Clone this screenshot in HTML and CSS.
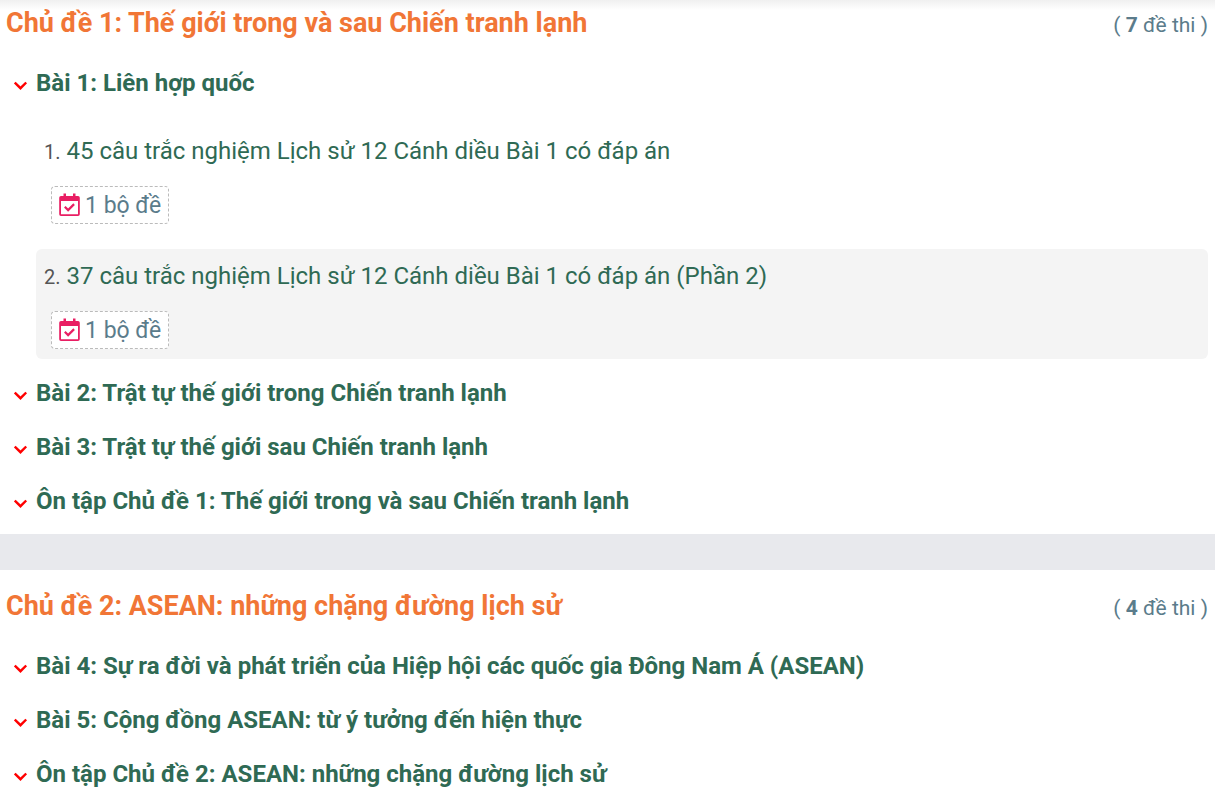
FILE: index.html
```html
<!DOCTYPE html>
<html lang="vi">
<head>
  <meta charset="UTF-8">
  <meta name="viewport" content="width=device-width, initial-scale=1">
  <title>Trắc nghiệm Lịch sử 12 Cánh diều</title>
  <link rel="stylesheet" href="styles.css">
</head>
<body>
  <svg class="sprite" aria-hidden="true">
    <symbol id="chevron" viewBox="0 0 14 10">
      <path d="M0.800 1.500 L6.500 7.200 L12.200 1.500" fill="none" stroke="currentColor" stroke-width="2.400"/>
    </symbol>
    <symbol id="calendar" viewBox="0 0 21 24">
      <path fill="currentColor" fill-rule="evenodd" d="M4.500 0.500h2.500V3h7V0.500h2.500V3H19a1.800 1.800 0 0 1 1.800 1.800v16.400a1.800 1.800 0 0 1-1.800 1.800H2a1.800 1.800 0 0 1-1.800-1.800V4.800A1.800 1.800 0 0 1 2 3h2.500zM2 8v13.200h17V8z"/>
      <path fill="none" stroke="currentColor" stroke-width="2.200" d="M5.800 13.800l3.300 3.300 6-6"/>
    </symbol>
  </svg>

  <section class="topic">
    <div class="topic-head">
      <h2><a href="#">Chủ đề 1: Thế giới trong và sau Chiến tranh lạnh</a></h2>
      <span class="count">( <b>7</b> đề thi )</span>
    </div>
    <div class="lesson open">
      <h3><svg class="chevron"><use href="#chevron"/></svg><a href="#">Bài 1: Liên hợp quốc</a></h3>
      <div class="exams">
        <div class="exam">
          <p><span class="num">1.</span> <a href="#">45 câu trắc nghiệm Lịch sử 12 Cánh diều Bài 1 có đáp án</a></p>
          <span class="badge"><svg class="calendar"><use href="#calendar"/></svg>1 bộ đề</span>
        </div>
        <div class="exam even">
          <p><span class="num">2.</span> <a href="#">37 câu trắc nghiệm Lịch sử 12 Cánh diều Bài 1 có đáp án (Phần 2)</a></p>
          <span class="badge"><svg class="calendar"><use href="#calendar"/></svg>1 bộ đề</span>
        </div>
      </div>
    </div>
    <div class="lesson">
      <h3><svg class="chevron"><use href="#chevron"/></svg><a href="#">Bài 2: Trật tự thế giới trong Chiến tranh lạnh</a></h3>
    </div>
    <div class="lesson">
      <h3><svg class="chevron"><use href="#chevron"/></svg><a href="#">Bài 3: Trật tự thế giới sau Chiến tranh lạnh</a></h3>
    </div>
    <div class="lesson">
      <h3><svg class="chevron"><use href="#chevron"/></svg><a href="#">Ôn tập Chủ đề 1: Thế giới trong và sau Chiến tranh lạnh</a></h3>
    </div>
  </section>

  <section class="topic">
    <div class="topic-head">
      <h2><a href="#">Chủ đề 2: ASEAN: những chặng đường lịch sử</a></h2>
      <span class="count">( <b>4</b> đề thi )</span>
    </div>
    <div class="lesson">
      <h3><svg class="chevron"><use href="#chevron"/></svg><a href="#">Bài 4: Sự ra đời và phát triển của Hiệp hội các quốc gia Đông Nam Á (ASEAN)</a></h3>
    </div>
    <div class="lesson">
      <h3><svg class="chevron"><use href="#chevron"/></svg><a href="#">Bài 5: Cộng đồng ASEAN: từ ý tưởng đến hiện thực</a></h3>
    </div>
    <div class="lesson">
      <h3><svg class="chevron"><use href="#chevron"/></svg><a href="#">Ôn tập Chủ đề 2: ASEAN: những chặng đường lịch sử</a></h3>
    </div>
  </section>
</body>
</html>
```
FILE: styles.css
```css
:root {
  --orange: #f17636;
  --green: #2f6a54;
  --slate: #5b7c8b;
  --pink: #e91e63;
}

body {
  margin: 0;
  /* soft shadow under the site header */
  background: #fff linear-gradient(#f0f0f0, #fff) no-repeat top / 100% 10px;
  color: var(--green);
  font-family: Roboto, sans-serif;
  font-size: 24px;
}

a {
  color: inherit;
  text-decoration: none;
}

.sprite {
  display: none;
}

/* Topic block */
.topic {
  padding: 0 7px 6px 6px;
}

.topic + .topic {
  border-top: 36px solid #e8e9ed;
  padding-top: 13px;
}

.topic-head {
  display: flex;
  justify-content: space-between;
  align-items: center;
  height: 46px;
  margin-bottom: 10px;
}

h2 {
  margin: 0;
  color: var(--orange);
  font-size: 27px;
  font-weight: 700;
}

.count {
  padding-top: 3px;
  color: var(--slate);
  font-size: 21px;
}

.count b {
  font-weight: 700;
}

/* Lessons */
h3 {
  display: flex;
  align-items: center;
  gap: 8px;
  margin: 0;
  padding-left: 8px;
  font-size: 24px;
  font-weight: 700;
  line-height: 54px;
}

.chevron {
  width: 14px;
  height: 10px;
  margin-top: 6px;
  color: #f00;
}

/* Exams */
.exams {
  display: flex;
  flex-direction: column;
  gap: 15px;
  margin: 14px 0 7px 30px;
}

.exam {
  padding: 10px 8px;
  border-radius: 6px;
}

.exam.even {
  background: #f4f4f4;
}

.exam p {
  margin: 0 0 17px;
  line-height: 34px;
}

.num {
  color: #555;
  font-size: 20px;
}

.badge {
  display: inline-flex;
  align-items: center;
  gap: 5px;
  height: 36px;
  margin-left: 7px;
  padding: 0 7px;
  border: 1px dashed #bbb;
  border-radius: 4px;
  background: #fff;
  color: var(--slate);
  font-size: 23px;
}

.calendar {
  width: 21px;
  height: 24px;
  color: var(--pink);
}
```
